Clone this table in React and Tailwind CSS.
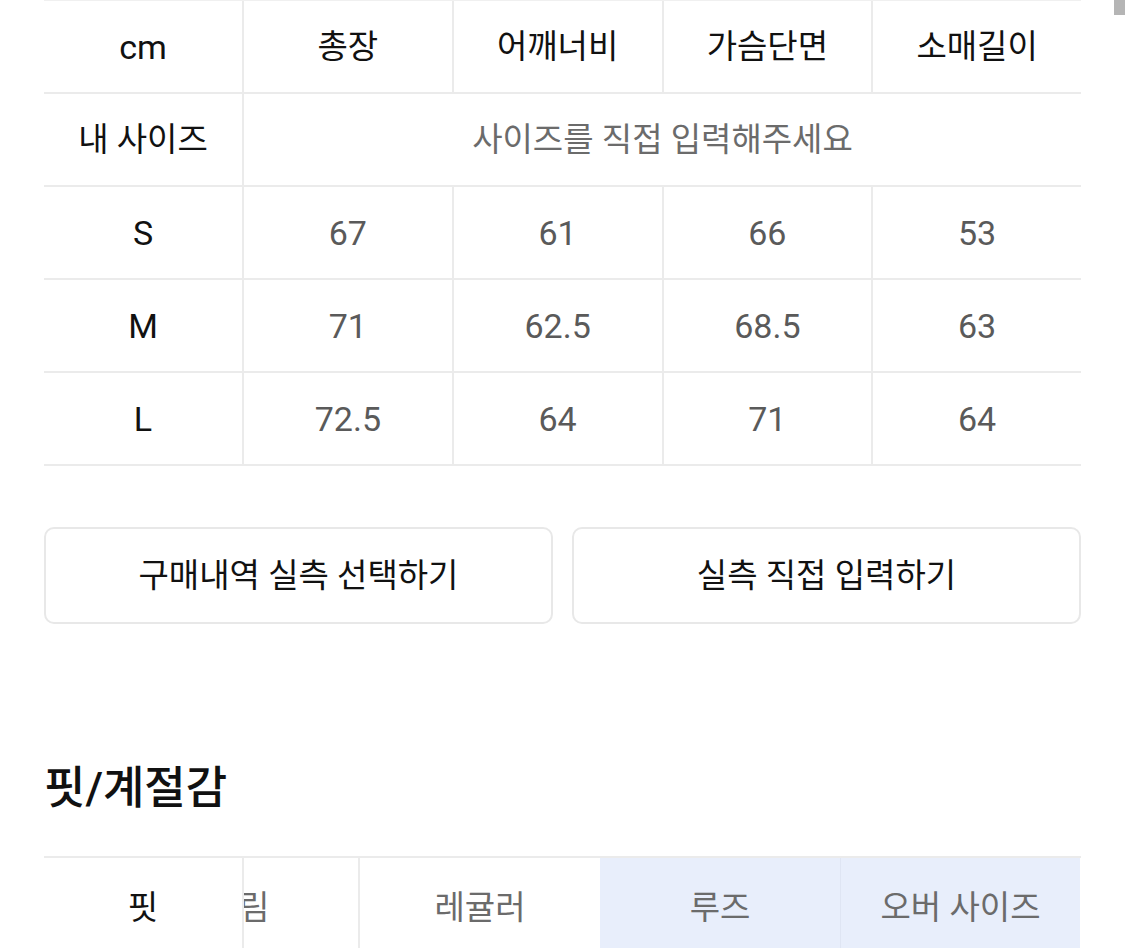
import React from 'react';

const font = "font-['Roboto','Noto_Sans_CJK_KR',sans-serif]";

const headers = ['총장', '어깨너비', '가슴단면', '소매길이'];
const sizes = [
  { name: 'S', values: ['67', '61', '66', '53'] },
  { name: 'M', values: ['71', '62.5', '68.5', '63'] },
  { name: 'L', values: ['72.5', '64', '71', '64'] },
];

const Row = ({ children }) => (
  <div className="grid grid-cols-[198px_repeat(4,1fr)] h-[93px] border-b-2 border-[#ebebeb]">
    {children}
  </div>
);

const Cell = ({ children, first, className = '' }) => (
  <div
    className={`flex items-center justify-center ${first ? '' : 'border-l-2 border-[#ebebeb]'} ${className}`}
  >
    {children}
  </div>
);

export default function App() {
  return (
    <div className={`relative w-[1125px] h-[948px] overflow-hidden bg-white ${font} text-[33px] leading-none`}>
      {/* scrollbar thumb */}
      <div className="absolute right-0 top-0 w-[11px] h-[15px] bg-[#b5b5b5]" />

      <div className="px-[44px]">
        {/* size table */}
        <div className="border-t border-[#f0f0f0]">
          <Row>
            <Cell first className="text-[#111] text-[34px]">cm</Cell>
            {headers.map((h) => (
              <Cell key={h} className="text-[#111]">{h}</Cell>
            ))}
          </Row>
          <div className="grid grid-cols-[198px_1fr] h-[93px] border-b-2 border-[#ebebeb]">
            <Cell first className="text-[#111]">내 사이즈</Cell>
            <Cell className="text-[#6b6b6b]">사이즈를 직접 입력해주세요</Cell>
          </div>
          {sizes.map((s) => (
            <Row key={s.name}>
              <Cell first className="text-[#111] text-[34px]">{s.name}</Cell>
              {s.values.map((v, i) => (
                <Cell key={i} className="text-[#5a5a5a] text-[34px]">{v}</Cell>
              ))}
            </Row>
          ))}
        </div>

        {/* buttons */}
        <div className="mt-[61px] grid grid-cols-2 gap-[19px]">
          <button className="h-[97px] rounded-[10px] border-2 border-[#e8e8e8] text-[#111] text-[33px]">
            구매내역 실측 선택하기
          </button>
          <button className="h-[97px] rounded-[10px] border-2 border-[#e8e8e8] text-[#111] text-[33px]">
            실측 직접 입력하기
          </button>
        </div>

        {/* fit section */}
        <h2 className="mt-[136px] h-[56px] flex items-center text-[45px] font-medium text-[#111]">
          핏/계절감
        </h2>

        <div className="mt-[40px] flex h-[100px] border-t-2 border-[#ebebeb]">
          <div className="w-[198px] flex-shrink-0 flex items-center justify-center text-[#111]">핏</div>
          <div className="flex-1 overflow-hidden border-l-2 border-[#ebebeb]">
            <div className="flex h-full -ml-[124px]">
              <div className="w-[240px] flex-shrink-0 flex items-center justify-center text-[#6b6b6b] border-r-2 border-[#ebebeb]">
                슬림
              </div>
              <div className="w-[240px] flex-shrink-0 flex items-center justify-center text-[#6b6b6b]">
                레귤러
              </div>
              <div className="w-[240px] flex-shrink-0 flex items-center justify-center text-[#6b6b6b] bg-[#e8eefb]">
                루즈
              </div>
              <div className="w-[240px] flex-shrink-0 flex items-center justify-center text-[#6b6b6b] bg-[#e8eefb] border-l border-[#dfe5f3]">
                오버 사이즈
              </div>
            </div>
          </div>
        </div>
      </div>
    </div>
  );
}
